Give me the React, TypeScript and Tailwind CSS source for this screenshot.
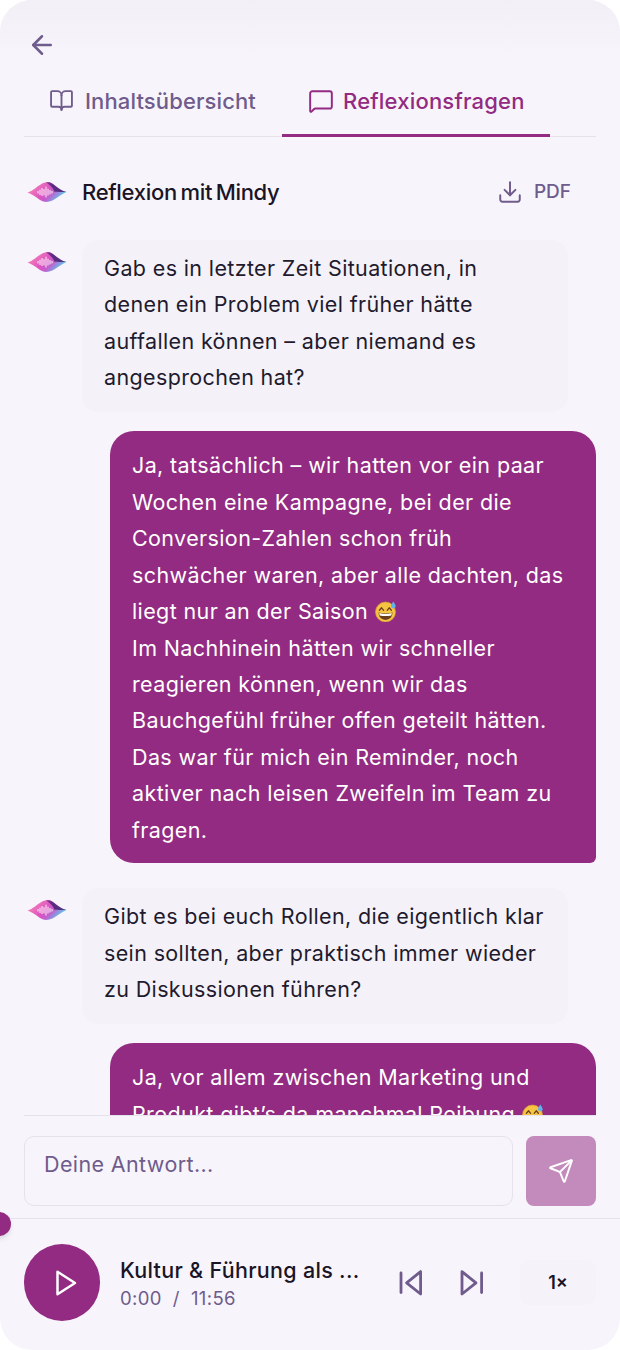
import { ArrowLeft, BookOpen, MessageSquare, Download, Send } from 'lucide-react';

function MindyLogo({ id }: { id: string }) {
  return (
    <svg width="40" height="22" viewBox="0 0 40 22" className="shrink-0">
      <defs>
        <linearGradient id={`${id}-a`} x1="0" y1="0" x2="1" y2="0.5">
          <stop offset="0" stopColor="#f8cfa8" />
          <stop offset="0.22" stopColor="#f07ab8" />
          <stop offset="0.55" stopColor="#dc55c0" />
          <stop offset="0.72" stopColor="#c45ccc" />
          <stop offset="1" stopColor="#5cc8ee" />
        </linearGradient>
        <linearGradient id={`${id}-b`} x1="0" y1="0" x2="1" y2="0.4">
          <stop offset="0" stopColor="#a03a98" />
          <stop offset="0.35" stopColor="#5d2b84" />
          <stop offset="1" stopColor="#54307f" />
        </linearGradient>
      </defs>
      <path d="M0.5 11.5 C6 10 9.5 5.5 14 3.2 C18 1 22 0.6 25.5 2.8 C29.5 5.5 34 9.8 39.5 11 C34 13 30 17.5 25.5 19.5 C21 21.5 17 21.5 13 19 C9 16 5 13 0.5 11.5Z" fill={`url(#${id}-a)`} />
      <path d="M19 1.5 C21.5 0.8 23.8 1.2 25.8 3 C29.5 5.8 34 9.8 39.5 11 C35 11 31 11 27.5 10.8 C26 7 23 3.8 19 1.5Z" fill={`url(#${id}-b)`} />
      <g stroke="#fbe6f6" strokeWidth="1.1" strokeLinecap="round">
        <path d="M11 10.5v1.5" /><path d="M13 9v4.5" /><path d="M15 7.5v7" /><path d="M17 8.5v5.5" /><path d="M19 6v10" /><path d="M21 8v6" /><path d="M23 9.5v3.5" /><path d="M25 10.5v1.5" />
      </g>
    </svg>
  );
}

function SweatEmoji() {
  return (
    <svg width="21" height="21" viewBox="0 0 21 21" className="inline-block align-[-3px]">
      <circle cx="10.5" cy="11" r="10" fill="#f5c443" stroke="#dd9d3c" strokeWidth="0.7" />
      <path d="M3.4 11.5 Q10.5 13.6 17.6 11.5 Q17 18.6 10.5 18.9 Q4 18.6 3.4 11.5Z" fill="#6b3f1d" />
      <path d="M4.2 12.1 Q10.5 14 16.8 12.1 L16.4 14.4 Q10.5 15.8 4.6 14.4Z" fill="#fff" />
      <path d="M4.4 9.3 L6.6 6.8 L8.6 9.3 M12.2 9.3 L14.2 6.8 L16.4 9.3" fill="none" stroke="#6b3f1d" strokeWidth="1.3" strokeLinecap="round" strokeLinejoin="round" />
      <path d="M18.3 0.5 C19.6 2.8 20.7 3.8 20.7 5.1 A2.4 2.4 0 0 1 15.9 5.1 C15.9 3.8 17 2.8 18.3 0.5Z" fill="#5fb4ee" />
    </svg>
  );
}

// stroke icons for the player, the package versions have rounder triangles
function PlayerIcon({ kind }: { kind: 'back' | 'forward' | 'play' }) {
  const size = kind === 'play' ? 30 : 33.6;
  return (
    <svg width={size} height={size} viewBox="0 0 24 24" fill="none" stroke="currentColor" strokeWidth="2" strokeLinecap="round" strokeLinejoin="round">
      {kind === 'back' && (
        <>
          <polygon points="19 20 9 12 19 4 19 20" />
          <line x1="5" y1="19" x2="5" y2="5" />
        </>
      )}
      {kind === 'forward' && (
        <>
          <polygon points="5 4 15 12 5 20 5 4" />
          <line x1="19" y1="5" x2="19" y2="19" />
        </>
      )}
      {kind === 'play' && <polygon points="6 3 20 12 6 21 6 3" />}
    </svg>
  );
}

function BotMessage({ id, lines }: { id: string; lines: string[] }) {
  return (
    <div className="flex items-start mr-[28px]">
      <div className="w-[58px] shrink-0 pt-[11px] pl-[3px]">
        <MindyLogo id={id} />
      </div>
      <div className="flex-1 bg-[#f4f2f8] rounded-[16px] pl-[22px] pr-[10px] pt-[10px] pb-[16.5px] text-[#1f1a2e] text-[21.5px] tracking-[0.36px] leading-[36.45px] whitespace-nowrap">
        {lines.map((l) => (
          <div key={l}>{l}</div>
        ))}
      </div>
    </div>
  );
}

function UserMessage({ children }: { children: React.ReactNode }) {
  return (
    <div className="ml-[86px] bg-[#922b81] rounded-[24px] rounded-br-[6px] pl-[22px] pr-[10px] pt-[16px] pb-[15px] text-white text-[21.5px] tracking-[0.38px] leading-[36.45px] whitespace-nowrap">
      {children}
    </div>
  );
}

export default function App() {
  return (
    <div className="w-[620px] h-[1350px] bg-white font-['Inter',sans-serif]">
      <div className="w-full h-full bg-[#f7f5fb] rounded-[32px] overflow-hidden flex flex-col relative">
        <div className="h-[137px] shrink-0 px-[24px] bg-gradient-to-b from-[#f2f0f6] to-[#f7f5fb] to-[60px] flex flex-col">
          <div className="pt-[30px] pl-[3px] h-[70px] text-[#6f5b8c]">
            <ArrowLeft size={30} strokeWidth={2} />
          </div>
          <div className="flex flex-1 border-b border-[#e5e2ec]">
            <div className="w-[258px] flex items-start gap-[11px] pl-[25px] pt-[16px] text-[#6f5b8c] text-[22px] tracking-[0.12px] font-medium leading-[30px]">
              <BookOpen size={25} strokeWidth={1.8} className="mt-[2px]" />
              Inhaltsübersicht
            </div>
            <div className="w-[268px] flex items-start gap-[9px] pl-[26px] pt-[16px] text-[#922b81] text-[22px] tracking-[0.2px] font-medium leading-[30px] border-b-[3px] border-[#922b81] -mb-px">
              <MessageSquare size={26} strokeWidth={1.8} className="mt-[2px]" />
              Reflexionsfragen
            </div>
          </div>
        </div>

        <div className="flex items-center justify-between pl-[27px] pr-[49px] pt-[27px] h-[103px] pb-[20px] shrink-0">
          <div className="flex items-center gap-[15px]">
            <MindyLogo id="head" />
            <span className="text-[22px] font-[550] text-[#1a1426] tracking-[-0.3px] [word-spacing:-2px]">Reflexion mit Mindy</span>
          </div>
          <div className="flex items-center gap-[11px] text-[#6f5b8c] text-[19px] font-medium">
            <Download size={26} strokeWidth={1.8} />
            PDF
          </div>
        </div>

        <div className="flex-1 min-h-0 overflow-hidden px-[24px] flex flex-col gap-[19px] -mb-px">
          <BotMessage
            id="m1"
            lines={['Gab es in letzter Zeit Situationen, in', 'denen ein Problem viel früher hätte', 'auffallen können – aber niemand es', 'angesprochen hat?']}
          />
          <UserMessage>
            <div>Ja, tatsächlich – wir hatten vor ein paar</div>
            <div>Wochen eine Kampagne, bei der die</div>
            <div>Conversion-Zahlen schon früh</div>
            <div>schwächer waren, aber alle dachten, das</div>
            <div>liegt nur an der Saison <SweatEmoji /></div>
            <div>Im Nachhinein hätten wir schneller</div>
            <div>reagieren können, wenn wir das</div>
            <div>Bauchgefühl früher offen geteilt hätten.</div>
            <div>Das war für mich ein Reminder, noch</div>
            <div>aktiver nach leisen Zweifeln im Team zu</div>
            <div>fragen.</div>
          </UserMessage>
          <div className="mt-[6px]">
            <BotMessage
              id="m2"
              lines={['Gibt es bei euch Rollen, die eigentlich klar', 'sein sollten, aber praktisch immer wieder', 'zu Diskussionen führen?']}
            />
          </div>
          <UserMessage>
            <div>Ja, vor allem zwischen Marketing und</div>
            <div>Produkt gibt’s da manchmal Reibung <SweatEmoji /></div>
          </UserMessage>
        </div>

        <div className="h-[103px] shrink-0 mx-[24px] border-t border-[#e5e2ec] pt-[20px] flex gap-[13px]">
          <div className="flex-1 h-[70px] border border-[#e5e2ec] rounded-[10px] px-[19px] pt-[12px] text-[#6f5b8c] text-[21.5px] tracking-[0.38px] leading-[30px]">
            Deine Antwort...
          </div>
          <div className="w-[70px] h-[70px] rounded-[8px] bg-[#c38bbb] flex items-center justify-center text-white">
            <Send size={26} strokeWidth={1.8} />
          </div>
        </div>

        <div className="h-[132px] shrink-0 border-t border-[#e5e2ec] relative flex items-start pt-[25px] pl-[24px]">
          <div className="absolute left-[-13px] top-[-7px] w-[24px] h-[24px] rounded-full bg-[#922b81] shadow-md" />
          <div className="w-[76px] h-[77px] rounded-full bg-[#922b81] flex items-center justify-center text-white shrink-0 pl-[5px]">
            <PlayerIcon kind="play" />
          </div>
          <div className="ml-[20px] w-[250px] pt-[10px]">
            <div className="text-[21.5px] tracking-[0.3px] font-medium text-[#1a1426] leading-[32px] whitespace-nowrap">Kultur &amp; Führung als ...</div>
            <div className="text-[18.5px] tracking-[0.35px] text-[#6f5b8c] leading-[24px] whitespace-pre">0:00  /  11:56</div>
          </div>
          <div className="absolute left-[394px] top-[47px] flex items-center gap-[27.4px] text-[#6f5b8c]">
            <PlayerIcon kind="back" />
            <PlayerIcon kind="forward" />
          </div>
          <div className="absolute right-[24px] top-[41px] w-[76px] h-[45px] rounded-[10px] bg-[#f5f3f9] flex items-center justify-center text-[#1a1426] text-[18px] font-semibold">
            1×
          </div>
        </div>
      </div>
    </div>
  );
}
